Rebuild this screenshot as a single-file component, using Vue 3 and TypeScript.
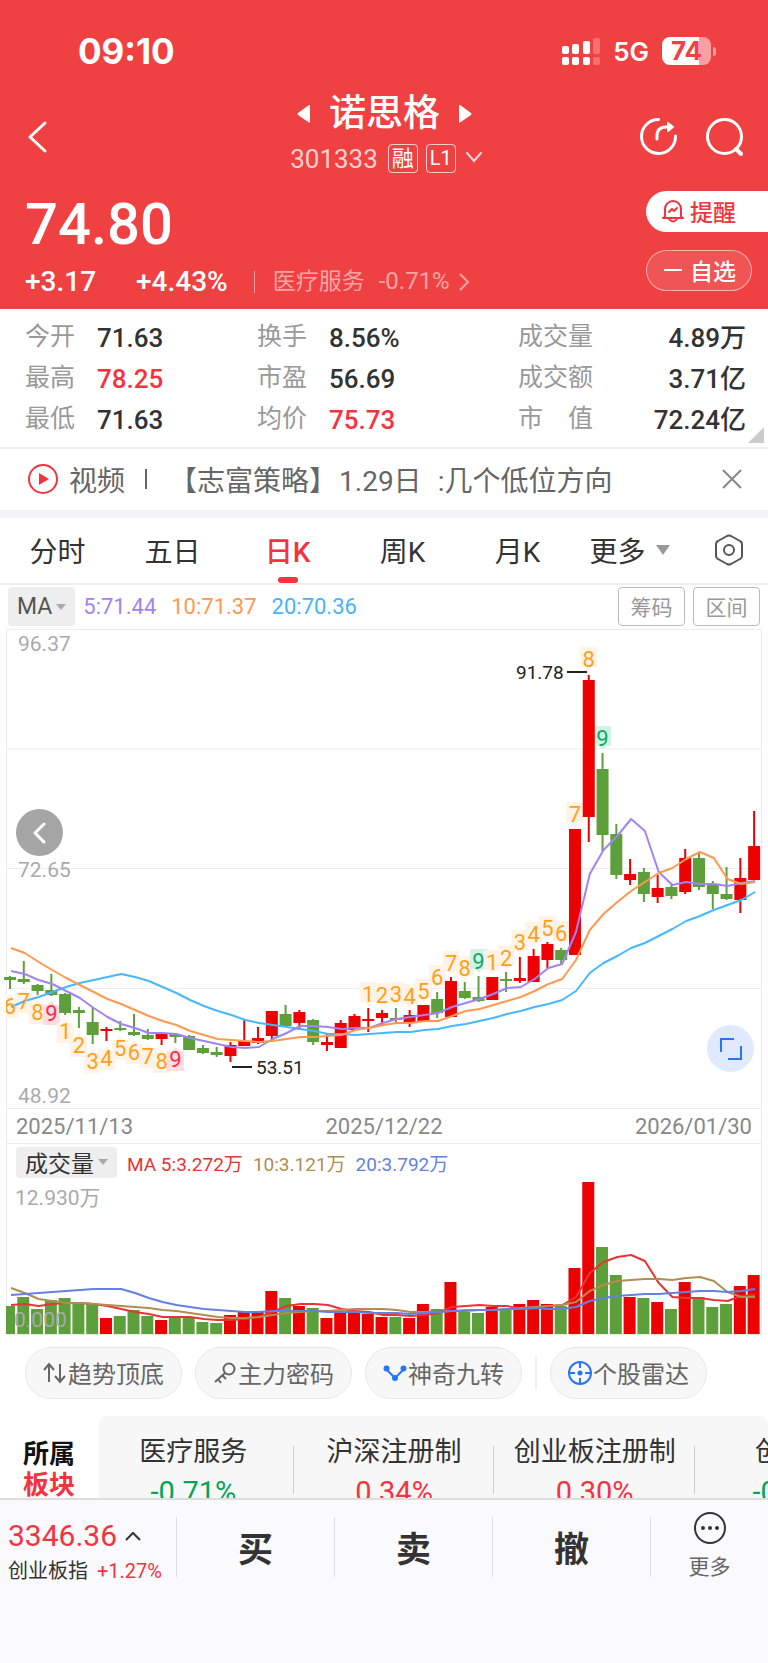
<script setup lang="ts">
import { computed, ref } from 'vue'

type Candle = [up: 0 | 1, top: number, bottom: number, high: number, low: number]
type Mark = [index: number, label: string, y: number, below: boolean]

const stats = [
  { label: '今开', value: '71.63' },
  { label: '换手', value: '8.56%' },
  { label: '成交量', value: '4.89万' },
  { label: '最高', value: '78.25', up: true },
  { label: '市盈', value: '56.69' },
  { label: '成交额', value: '3.71亿' },
  { label: '最低', value: '71.63' },
  { label: '均价', value: '75.73', up: true },
  { label: '市　值', value: '72.24亿' },
]

const periods = ['分时', '五日', '日K', '周K', '月K', '更多']
const period = ref('日K')

const candles: Candle[] = [
  [0, 977, 980, 976, 989], [0, 979, 982, 961, 984], [0, 985, 991, 984, 995], [0, 990, 995, 974, 996],
  [0, 994, 1013, 993, 1015], [0, 1010, 1013, 1007, 1028], [0, 1022, 1035, 1007, 1044], [1, 1029, 1031, 1027, 1041],
  [0, 1028, 1030, 1021, 1031], [0, 1032, 1035, 1014, 1036], [0, 1035, 1039, 1029, 1040], [1, 1034, 1039, 1033, 1045],
  [0, 1034, 1037, 1033, 1043], [0, 1036, 1050, 1035, 1050], [0, 1048, 1053, 1045, 1054], [0, 1052, 1055, 1047, 1057],
  [1, 1045, 1056, 1042, 1062], [1, 1041, 1046, 1020, 1046], [1, 1038, 1043, 1027, 1044], [1, 1011, 1036, 1011, 1039],
  [0, 1014, 1026, 1005, 1027], [1, 1012, 1023, 1010, 1030], [0, 1020, 1042, 1019, 1045], [1, 1042, 1045, 1034, 1051],
  [1, 1023, 1048, 1020, 1048], [1, 1016, 1030, 1014, 1030], [1, 1019, 1021, 1008, 1032], [1, 1013, 1018, 1010, 1026],
  [0, 1018, 1020, 1008, 1024], [1, 1015, 1023, 1010, 1027], [1, 1005, 1021, 1005, 1021], [0, 999, 1013, 992, 1018],
  [1, 981, 1017, 977, 1017], [0, 991, 998, 982, 999], [0, 997, 1001, 976, 1002], [1, 977, 1000, 977, 1000],
  [0, 979, 981, 972, 992], [1, 978, 981, 957, 983], [1, 956, 982, 949, 982], [1, 944, 960, 942, 968],
  [0, 950, 960, 948, 964], [1, 829, 955, 829, 955], [1, 680, 817, 675, 842], [0, 769, 835, 753, 851],
  [0, 834, 875, 824, 879], [1, 874, 880, 859, 885], [0, 872, 894, 868, 902], [1, 888, 897, 875, 903],
  [0, 887, 896, 885, 899], [1, 858, 892, 849, 894], [0, 858, 887, 852, 890], [0, 885, 894, 881, 909],
  [0, 894, 899, 867, 900], [1, 878, 900, 858, 913], [1, 846, 880, 811, 880],
]

const priceLines = [
  { name: 'ma20', ys: [1007, 1001, 997, 992, 987, 983, 980, 977, 974, 977, 981, 987, 993, 1000, 1006, 1011, 1015, 1020, 1023, 1025, 1027, 1029, 1031, 1034, 1034, 1035, 1034, 1033, 1032, 1032, 1030, 1029, 1026, 1024, 1021, 1018, 1014, 1011, 1007, 1004, 1000, 991, 973, 963, 956, 948, 943, 936, 929, 921, 916, 910, 905, 900, 892] },
  { name: 'ma5', ys: [971, 974, 980, 984, 991, 998, 1008, 1017, 1024, 1028, 1033, 1033, 1034, 1038, 1041, 1044, 1047, 1048, 1047, 1039, 1033, 1026, 1026, 1027, 1029, 1028, 1028, 1023, 1019, 1017, 1015, 1013, 1007, 1003, 999, 994, 988, 987, 979, 968, 964, 932, 874, 850, 836, 819, 831, 872, 885, 882, 884, 884, 886, 883, 881] },
  { name: 'ma10', ys: [948, 953, 962, 970, 978, 985, 992, 999, 1004, 1010, 1016, 1021, 1025, 1031, 1035, 1039, 1040, 1041, 1042, 1041, 1039, 1037, 1037, 1036, 1035, 1030, 1028, 1025, 1023, 1023, 1021, 1021, 1016, 1011, 1009, 1005, 1001, 997, 991, 984, 979, 960, 930, 914, 902, 891, 882, 873, 868, 859, 852, 858, 879, 884, 882] },
]

const marks: Mark[] = [
  [0, '6', 1006, true], [1, '7', 1001, true], [2, '8', 1012, true], [3, '9', 1013, true],
  [4, '1', 1031, true], [5, '2', 1045, true], [6, '3', 1061, true], [7, '4', 1058, true],
  [8, '5', 1048, true], [9, '6', 1052, true], [10, '7', 1056, true], [11, '8', 1061, true], [12, '9', 1059, true],
  [26, '1', 994, false], [27, '2', 995, false], [28, '3', 994, false], [29, '4', 996, false], [30, '5', 991, false],
  [31, '6', 977, false], [32, '7', 963, false], [33, '8', 968, false], [34, '9', 961, false],
  [35, '1', 962, false], [36, '2', 958, false], [37, '3', 942, false], [38, '4', 934, false], [39, '5', 928, false],
  [40, '6', 933, false], [41, '7', 814, false], [42, '8', 659, false], [43, '9', 738, false],
]

const volumeTops = [1306, 1297, 1309, 1300, 1298, 1303, 1304, 1318, 1316, 1310, 1316, 1320, 1317, 1317, 1322, 1323, 1315, 1312, 1312, 1291, 1298, 1306, 1308, 1318, 1313, 1313, 1314, 1317, 1317, 1318, 1304, 1309, 1282, 1312, 1313, 1307, 1309, 1304, 1300, 1304, 1306, 1268, 1182, 1247, 1275, 1297, 1298, 1302, 1309, 1282, 1297, 1307, 1304, 1286, 1275]

const volumeLines = [
  { name: 'vol5', ys: [1305, 1304, 1306, 1304, 1303, 1303, 1304, 1306, 1309, 1312, 1314, 1317, 1317, 1317, 1319, 1320, 1320, 1319, 1317, 1312, 1306, 1304, 1304, 1305, 1309, 1311, 1312, 1315, 1315, 1316, 1315, 1313, 1307, 1306, 1305, 1306, 1306, 1309, 1308, 1306, 1305, 1297, 1273, 1262, 1257, 1255, 1261, 1283, 1297, 1298, 1298, 1300, 1301, 1296, 1295] },
  { name: 'vol10', ys: [1288, 1293, 1299, 1301, 1303, 1303, 1304, 1305, 1306, 1307, 1308, 1310, 1311, 1313, 1315, 1317, 1318, 1318, 1317, 1315, 1313, 1312, 1311, 1311, 1310, 1309, 1309, 1309, 1310, 1312, 1312, 1312, 1311, 1310, 1310, 1310, 1309, 1308, 1307, 1306, 1305, 1302, 1291, 1285, 1281, 1280, 1279, 1279, 1280, 1278, 1277, 1281, 1292, 1297, 1297] },
  { name: 'vol20', ys: [1295, 1294, 1293, 1292, 1291, 1290, 1289, 1289, 1289, 1293, 1298, 1302, 1305, 1307, 1309, 1310, 1311, 1312, 1312, 1311, 1311, 1311, 1311, 1312, 1312, 1312, 1313, 1313, 1313, 1314, 1313, 1312, 1311, 1311, 1310, 1310, 1309, 1309, 1308, 1309, 1309, 1307, 1301, 1298, 1296, 1295, 1294, 1294, 1293, 1292, 1291, 1291, 1292, 1291, 1289] },
]

const sectors = [
  { name: '医疗服务', change: '-0.71%' },
  { name: '沪深注册制', change: '0.34%' },
  { name: '创业板注册制', change: '0.30%' },
  { name: '创新药', change: '-0.52%' },
]

const x = (i: number) => 10 + i * 13.78
const path = (ys: number[]) => ys.map((y, i) => `${(x(i) + 1).toFixed(1)},${y}`).join(' ')
const tone = (m: Mark) => (m[1] !== '9' ? 'count' : m[3] ? 'nine-low' : 'nine-high')
const pointer = (m: Mark) => {
  const c = x(m[0])
  return m[3] ? `${c - 4},${m[2] - 8} ${c},${m[2] - 12} ${c + 4},${m[2] - 8}` : `${c - 4},${m[2] + 8} ${c},${m[2] + 12} ${c + 4},${m[2] + 8}`
}
const volumes = computed(() => volumeTops.map((top, i) => ({ top, up: candles[i][0] === 1 })))
</script>

<template>
  <main class="app">
    <header class="head">
      <div class="status">
        <span class="clock">09:10</span>
        <div class="signals">
          <svg width="40" height="30" viewBox="0 0 40 30" fill="#fff">
            <rect x="1" y="10" width="7" height="8" rx="2" /><rect x="11" y="8" width="7" height="10" rx="2" /><rect x="22" y="5" width="7" height="13" rx="2" />
            <rect x="1" y="21" width="7" height="8" rx="2" /><rect x="11" y="21" width="7" height="8" rx="2" /><rect x="22" y="21" width="7" height="8" rx="2" />
            <g opacity=".25"><rect x="32" y="2" width="7" height="16" rx="2" /><rect x="32" y="21" width="7" height="8" rx="2" /></g>
          </svg>
          <span class="net">5G</span>
          <span class="battery">74</span>
          <i class="nub"></i>
        </div>
      </div>

      <div class="nav">
        <button class="icon-btn back" aria-label="返回">
          <svg width="22" height="34" viewBox="0 0 22 34" fill="none" stroke="#fff" stroke-width="3" stroke-linecap="round" stroke-linejoin="round"><path d="M18 3 3 17l15 14" /></svg>
        </button>
        <div class="name-block">
          <div class="name-row">
            <button class="icon-btn" aria-label="上一只"><svg width="14" height="18" viewBox="0 0 14 18" fill="#fff"><path d="M12 0Q13 0 13 1V17Q13 18 12 17.500L1 10Q0 9 1 8Z" /></svg></button>
            <h1>诺思格</h1>
            <button class="icon-btn" aria-label="下一只"><svg width="14" height="18" viewBox="0 0 14 18" fill="#fff"><path d="M2 0Q1 0 1 1V17Q1 18 2 17.500L13 10Q14 9 13 8Z" /></svg></button>
          </div>
          <div class="code-row">
            <span class="code">301333</span>
            <span class="tag rong">融</span>
            <span class="tag">L1</span>
            <svg class="fold" width="16" height="12" viewBox="0 0 16 12" fill="none" stroke="#fff" stroke-opacity=".8" stroke-width="2" stroke-linecap="round"><path d="m1 1 7 8 7-8" /></svg>
          </div>
        </div>
        <div class="actions">
          <button class="icon-btn" aria-label="分享">
            <svg width="40" height="40" viewBox="0 0 40 40" fill="none" stroke="#fff" stroke-width="3" stroke-linecap="round" stroke-linejoin="round"><path d="M20.500 2.500A17 17 0 1 0 37.500 19" /><path d="M19 22v-3q0-9 9-9h5" /><path d="m30 6 5 4-5 4Z" fill="#fff" stroke-width="2" /></svg>
          </button>
          <button class="icon-btn" aria-label="搜索">
            <svg width="40" height="40" viewBox="0 0 40 40" fill="none" stroke="#fff" stroke-width="3" stroke-linecap="round"><circle cx="19.500" cy="19.500" r="17" /><path d="m31 32 5 5" stroke-width="4" /></svg>
          </button>
        </div>
      </div>

      <div class="quote">
        <div class="figures">
          <strong class="price">74.80</strong>
          <div class="moves">
            <span class="move first">+3.17</span><span class="move">+4.43%</span>
            <a class="industry" href="#industry">
              <span class="ind-name">医疗服务</span><span class="ind-change">-0.71%</span>
              <svg width="12" height="20" viewBox="0 0 12 20" fill="none" stroke="currentColor" stroke-width="2"><path d="m2 2 8 8-8 8" /></svg>
            </a>
          </div>
        </div>
        <div class="side">
          <button class="remind">
            <svg width="24" height="24" viewBox="0 0 24 24" fill="none" stroke="#f5333f" stroke-width="2" stroke-linecap="round" stroke-linejoin="round"><path d="M4 18v-8a8 8 0 0 1 16 0v8l2 1H2ZM8 20q4 5 8 0M8 13l3-3 2 2 3-3" /></svg>
            提醒
          </button>
          <button class="watch"><i class="minus"></i>自选</button>
        </div>
      </div>
    </header>

    <section class="stats-wrap">
      <dl class="stats">
        <div v-for="s in stats" :key="s.label" class="stat">
          <dt>{{ s.label }}</dt>
          <dd :class="{ up: s.up }">{{ s.value }}</dd>
        </div>
      </dl>
      <i class="corner"></i>
    </section>

    <section class="video">
      <svg width="32" height="32" viewBox="0 0 32 32" fill="none"><circle cx="16" cy="16" r="14" stroke="#f5333f" stroke-width="2" /><path d="m12 10 10 6-10 6Z" fill="#f5333f" /></svg>
      <a href="#video"><span>视频</span><i class="bar"></i><span>【志富策略】</span><span class="day">1.29日</span><span>:几个低位方向</span></a>
      <button class="icon-btn" aria-label="关闭"><svg width="20" height="20" viewBox="0 0 20 20" stroke="#888" stroke-width="2"><path d="m1 1 18 18M19 1 1 19" /></svg></button>
    </section>

    <nav class="tabs">
      <button v-for="p in periods" :key="p" :class="{ active: p === period }" @click="period = p">
        {{ p }}<i v-if="p === '更多'" class="caret"></i>
      </button>
      <button aria-label="设置">
        <svg width="30" height="32" viewBox="0 0 30 32" fill="none" stroke="#555" stroke-width="2" stroke-linejoin="round"><path d="M13 2Q15 1 17 2L26 7Q28 8 28 10V22Q28 24 26 25L17 30Q15 31 13 30L4 25Q2 24 2 22V10Q2 8 4 7Z" /><circle cx="15" cy="16" r="5" /></svg>
      </button>
    </nav>

    <div class="ma-row">
      <button class="chip">MA<i class="caret small"></i></button>
      <span class="c-ma5">5:71.44</span><span class="c-ma10">10:71.37</span><span class="c-ma20">20:70.36</span>
      <div class="tools"><button>筹码</button><button>区间</button></div>
    </div>

    <section class="kchart">
      <svg viewBox="0 629 768 480">
        <path class="grid" d="M6.500 1109V629.500H761.500V1109M6 749H761M6 868.500H761M6 988.500H761M6 1108.500H761" />
        <text class="axis" x="18" y="651">96.37</text>
        <text class="axis" x="18" y="877">72.65</text>
        <text class="axis" x="18" y="1103">48.92</text>
        <g v-for="m in marks" :key="m[0]" :class="tone(m)">
          <rect :x="x(m[0]) - 8.5" :y="m[3] ? m[2] - 8 : m[2] - 12" width="17" height="20" />
          <polygon :points="pointer(m)" />
        </g>
        <g v-for="(c, i) in candles" :key="i" :class="c[0] ? 'rise' : 'fall'">
          <rect :x="x(i) - 1" :y="c[3]" width="2" :height="c[4] - c[3]" />
          <rect :x="x(i) - 6" :y="c[1]" width="12" :height="c[2] - c[1]" />
        </g>
        <polyline v-for="l in priceLines" :key="l.name" :class="l.name" :points="path(l.ys)" />
        <text v-for="m in marks" :key="m[0]" class="num" :class="tone(m)" :x="x(m[0])" :y="m[2] + 8">{{ m[1] }}</text>
        <rect class="cover" x="0" y="990" width="6" height="30" />
        <path d="M567 672H587M232 1067H252" stroke="#222" stroke-width="2" />
        <text class="peak" x="516" y="679">91.78</text>
        <text class="peak" x="256" y="1074">53.51</text>
      </svg>
      <button class="round prev" aria-label="更早"><svg width="14" height="22" viewBox="0 0 14 22" fill="none" stroke="#fff" stroke-width="3" stroke-linecap="round" stroke-linejoin="round"><path d="m11 2-9 9 9 9" /></svg></button>
      <button class="round full" aria-label="全屏"><svg width="22" height="22" viewBox="0 0 22 22" fill="none" stroke="#2476ff" stroke-width="2"><path d="M1 14V1h13M8 21h13V8" /></svg></button>
    </section>

    <div class="dates"><time>2025/11/13</time><time>2025/12/22</time><time>2026/01/30</time></div>

    <div class="vol-row">
      <button class="chip vol">成交量<i class="caret small"></i></button>
      <span class="c-vol5">MA 5:3.272万</span><span class="c-vol10">10:3.121万</span><span class="c-vol20">20:3.792万</span>
    </div>
    <svg class="vchart" viewBox="0 1180 768 155">
      <path class="grid" d="M6.500 1180V1334.500H761.500V1180" />
      <text class="axis" x="15" y="1205">12.930万</text>
      <rect v-for="(v, i) in volumes" :key="i" :class="v.up ? 'rise' : 'fall'" :x="i ? x(i) - 6.5 : 6" :y="v.top" :width="i ? 12 : 9" :height="1334 - v.top" />
      <polyline v-for="l in volumeLines" :key="l.name" :class="l.name" :points="path(l.ys)" />
      <text class="axis" x="14" y="1327">0.000</text>
    </svg>

    <div class="pills">
      <button>
        <svg width="24" height="24" viewBox="0 0 24 24" fill="none" stroke="#666" stroke-width="2"><path d="M6 21V4M1 9l5-6 5 6M17 3v17M12 15l5 6 5-6" /></svg><span>趋势顶底</span>
      </button>
      <button>
        <svg width="24" height="24" viewBox="0 0 24 24" fill="none" stroke="#666" stroke-width="2"><circle cx="16" cy="8" r="5.500" /><path d="M12 12 2 21M9 14l4 4M5 18l3 4" /></svg><span>主力密码</span>
      </button>
      <button>
        <svg width="24" height="24" viewBox="0 0 24 24" fill="#2476ff" stroke="#2476ff" stroke-width="2"><path d="m3 8 9 9 9-9" fill="none" /><circle cx="3.500" cy="7.500" r="2" /><circle cx="12" cy="17" r="2" /><circle cx="20.500" cy="7.500" r="2" /></svg><span>神奇九转</span>
      </button>
      <i class="sep"></i>
      <button>
        <svg width="24" height="24" viewBox="0 0 24 24" fill="none" stroke="#2476ff" stroke-width="2"><circle cx="12" cy="12" r="11" /><path d="M12 1v6M12 17v6M1 12h6M17 12h6" /><circle cx="12" cy="12" r="1.500" fill="#2476ff" /></svg><span>个股雷达</span>
      </button>
    </div>

    <section class="sector">
      <h2>所属<br /><em>板块</em></h2>
      <div class="sector-list">
        <a v-for="s in sectors" :key="s.name" href="#sector">
          <span>{{ s.name }}</span>
          <b :class="s.change.startsWith('-') ? 'down' : 'up'">{{ s.change }}</b>
        </a>
      </div>
    </section>

    <footer class="dock">
      <button class="index">
        <span class="index-top">3346.36<svg width="16" height="10" viewBox="0 0 16 10" fill="none" stroke="#333" stroke-width="2"><path d="m1 9 7-7 7 7" /></svg></span>
        <span class="index-sub">创业板指<b>+1.27%</b></span>
      </button>
      <button class="trade">买</button>
      <button class="trade">卖</button>
      <button class="trade">撤</button>
      <button class="more">
        <svg width="34" height="34" viewBox="0 0 34 34" fill="none"><circle cx="17" cy="17" r="15" stroke="#333" stroke-width="2" /><g fill="#333"><circle cx="10" cy="17" r="2" /><circle cx="17" cy="17" r="2" /><circle cx="24" cy="17" r="2" /></g></svg>
        更多
      </button>
    </footer>
  </main>
</template>

<style>
body { margin: 0; background: #fafafd; }
</style>

<style scoped>
.app { font-family: Roboto, "Noto Sans CJK SC", sans-serif; color: #333; background: #fff; overflow: hidden; min-height: 100vh; display: flex; flex-direction: column; }
.app * { box-sizing: border-box; }
svg { display: block; flex: none; }
button { font: inherit; color: inherit; background: none; border: 0; padding: 0; cursor: pointer; }
a { color: inherit; text-decoration: none; }
.icon-btn { display: flex; align-items: center; justify-content: center; }
.up { color: #f5333f; }
.down { color: #00a65a; }

.head { background: #f04142; color: #fff; }
.status { height: 90px; padding: 12px 52px 0 78px; display: flex; align-items: center; justify-content: space-between; font-family: Inter, sans-serif; }
.clock { font-size: 35px; font-weight: 700; line-height: 40px; }
.signals { display: flex; align-items: center; }
.net { font-size: 26px; font-weight: 600; margin: 0 13px 0 12px; }
.battery { width: 49px; height: 28px; border-radius: 8px; background: linear-gradient(90deg, #fff 75%, #f8a0a1 75%); color: #f04142; font-size: 26px; font-weight: 700; line-height: 28px; text-align: center; }
.nub { width: 3px; height: 9px; margin-left: 2px; border-radius: 0 4px 4px 0; background: #f8a0a1; }

.nav { height: 93px; padding: 0 23px 0 27px; display: grid; grid-template-columns: 1fr auto 1fr; align-items: center; }
.back { justify-self: start; }
.name-block { align-self: start; padding-top: 2px; }
.name-row { height: 44px; padding-right: 3px; display: flex; align-items: center; justify-content: center; gap: 18px; }
h1 { margin: 0; font-size: 37px; font-weight: 500; line-height: 44px; }
.code-row { margin-top: 7px; height: 30px; display: flex; align-items: center; gap: 8px; }
.code { padding-top: 2px; font-size: 26px; color: #fbd2d2; }
.tag { width: 30px; height: 29px; border: 1px solid rgba(255, 255, 255, .75); border-radius: 4px; font-size: 20px; line-height: 27px; text-align: center; }
.rong { font-size: 22px; margin-left: 2px; }
.fold { margin-left: 2px; }
.actions { justify-self: end; display: flex; gap: 27px; }

.quote { padding: 8px 0 13px 25px; display: flex; justify-content: space-between; }
.figures { padding-top: 3px; }
.price { display: block; font-size: 58px; font-weight: 500; line-height: 60px; }
.moves { margin-top: 14px; height: 28px; display: flex; align-items: center; }
.move { font-size: 28px; font-weight: 500; line-height: 28px; }
.first { width: 111px; }
.industry { margin-left: 26px; padding-left: 18px; height: 22px; border-left: 1px solid rgba(255, 255, 255, .5); display: flex; align-items: center; font-size: 23px; color: #f8a5a5; }
.ind-name { padding-bottom: 6px; }
.ind-change { margin: 0 8px 0 14px; padding-bottom: 2px; font-size: 24px; }
.side { width: 122px; display: flex; flex-direction: column; gap: 18px; font-size: 23px; font-weight: 500; }
.side button { height: 41px; padding-bottom: 2px; display: flex; align-items: center; }
.remind { padding-left: 15px; gap: 5px; background: #fff; color: #f5333f; border-radius: 21px 0 0 21px; }
.watch { width: 106px; padding-left: 17px; gap: 8px; border: 1px solid rgba(255, 255, 255, .55); background: rgba(255, 255, 255, .1); border-radius: 21px; }
.minus { width: 18px; height: 2px; background: #fff; }

.stats-wrap { position: relative; border-bottom: 2px solid #eee; }
.stats { margin: 0; padding: 8px 22px 7px 25px; display: grid; grid-template-columns: 232fr 261fr 228fr; grid-auto-rows: 41px; }
.stat { display: flex; align-items: center; font-size: 26px; }
dt { width: 72px; padding-bottom: 2px; font-size: 25px; color: #999; white-space: nowrap; line-height: 30px; }
dd { margin: 0; font-weight: 500; white-space: nowrap; line-height: 30px; }
.stat:nth-child(3n) dt { width: auto; }
.stat:nth-child(3n) dd { margin-left: auto; }
.corner { position: absolute; right: 4px; bottom: 4px; border: 8px solid; border-color: transparent #ccc #ccc transparent; }

.video { height: 69px; padding: 0 26px 2px 27px; display: flex; align-items: center; font-size: 28px; color: #666; border-bottom: 8px solid #f2f4f9; }
.video a { flex: 1; margin-left: 10px; display: flex; align-items: center; white-space: nowrap; }
.bar { width: 2px; height: 20px; margin: 0 22px 0 20px; background: #666; }
.day { margin: 0 16px 0 2px; }

.tabs { height: 67px; display: grid; grid-template-columns: repeat(6, 115fr) 78fr; border-bottom: 2px solid #eee; font-size: 28px; }
.tabs button { position: relative; padding-bottom: 2px; display: flex; align-items: center; justify-content: center; }
.tabs button:nth-child(6) { padding-right: 6px; }
.tabs .active { color: #f5333f; font-weight: 500; }
.tabs .active::after { content: ""; position: absolute; bottom: 0; width: 20px; height: 6px; border-radius: 3px; background: #f5333f; }
.caret { margin-left: 10px; border: 7px solid transparent; border-top: 10px solid #999; border-bottom: 0; }
.caret.small { margin-left: 4px; border-width: 6px 5px 0; border-top-color: #aaa; }

.ma-row { height: 44px; padding: 2px 8px 3px; display: flex; align-items: center; gap: 15px; font-size: 22px; }
.chip { height: 39px; padding: 0 9px; display: flex; align-items: center; background: #eee; border-radius: 4px; font-size: 23px; color: #555; }
.ma-row .chip { margin-right: -7px; }
.c-ma5 { color: #a084f5; }
.c-ma10 { color: #ff9850; }
.c-ma20 { color: #45b4f8; }
.tools { margin-left: auto; display: flex; gap: 8px; }
.tools button { width: 67px; height: 39px; padding-bottom: 2px; border: 1px solid #bbb; border-radius: 4px; color: #999; font-size: 21px; }

.kchart { position: relative; }
.kchart > svg, .vchart { width: 100%; height: auto; }
.grid { fill: none; stroke: #ececec; stroke-width: 1; }
.axis { font-size: 21px; fill: #aaa; }
.rise { fill: #ec0000; }
.fall { fill: #5d9f3a; }
polyline { fill: none; stroke-width: 2; stroke-linejoin: round; }
.ma5 { stroke: #a084f5; }
.ma10 { stroke: #ff9850; }
.ma20 { stroke: #45b8ff; }
.vol5 { stroke: #e83434; }
.vol10 { stroke: #b08d52; }
.vol20 { stroke: #6480e4; }
.count { fill: #fff3e6; }
.nine-low { fill: #ffdde1; }
.nine-high { fill: #d3f2e4; }
.num { font-size: 22px; text-anchor: middle; }
.num.count { fill: #ff9f1a; }
.num.nine-low { fill: #ff2d48; }
.num.nine-high { fill: #0bab68; }
.cover { fill: #fff; }
.peak { font-size: 19px; fill: #222; }
.round { position: absolute; width: 47px; height: 47px; border-radius: 50%; display: flex; align-items: center; justify-content: center; }
.prev { left: 16px; top: 180px; background: #a5a5a5; }
.full { right: 14px; bottom: 37px; background: #dfe9ff; }

.dates, .vol-row { margin: 0 6px; border: solid #ececec; border-width: 0 1px; display: flex; align-items: center; }
.dates { height: 35px; padding: 1px 9px 0; justify-content: space-between; border-bottom-width: 1px; font-size: 22px; color: #888; }
.vol-row { height: 36px; padding: 3px 9px 2px; gap: 10px; font-size: 19px; }
.chip.vol { height: 31px; padding-bottom: 2px; color: #333; }
.c-vol5 { color: #e83434; }
.c-vol10 { color: #b08d52; }
.c-vol20 { color: #6480e4; }

.pills { padding: 12px 25px 17px; display: flex; align-items: center; gap: 13px; }
.pills button { width: 157px; height: 52px; display: flex; align-items: center; justify-content: center; gap: 1px; border: 1px solid #e8e8e8; border-radius: 26px; background: #f7f7f7; color: #666; font-size: 24px; white-space: nowrap; }
.pills span { padding-bottom: 2px; }
.sep { width: 2px; height: 32px; background: #eee; }

.sector { height: 82px; overflow: hidden; display: flex; }
h2 { width: 99px; flex: none; margin: 0; padding: 23px 0 0 23px; font-size: 26px; line-height: 31px; font-weight: 700; color: #111; }
h2 em { font-style: normal; color: #f5333f; }
.sector-list { flex: 1; min-width: 0; display: flex; background: #f7f7f7; border-radius: 8px 8px 0 0; }
.sector-list a { flex: none; width: 30%; padding-top: 18px; display: flex; flex-direction: column; align-items: center; gap: 4px; font-size: 27px; line-height: 36px; white-space: nowrap; background: linear-gradient(#ccc, #ccc) right 30px / 1px 48px no-repeat; }
.sector-list a:first-child { margin-left: -6px; }
.sector-list b { font-size: 29px; font-weight: 400; }

.dock { flex: 1; min-height: 165px; padding-top: 17px; border-top: 2px solid #ddd; background: #fafafd; display: grid; grid-template-columns: 176fr 158fr 158fr 158fr 118fr; grid-template-rows: 60px; }
.dock button + button { border-left: 1px solid #ddd; }
.dock .index { padding-left: 8px; display: flex; flex-direction: column; text-align: left; }
.index-top { display: flex; align-items: center; gap: 8px; font-size: 30px; line-height: 38px; color: #f5333f; }
.index-sub { font-size: 20px; line-height: 32px; white-space: nowrap; }
.index-sub b { margin-left: 9px; font-weight: 400; color: #f5333f; }
.trade { padding-bottom: 2px; font-size: 35px; font-weight: 700; }
.dock .more { display: flex; flex-direction: column; align-items: center; gap: 8px; font-size: 21px; line-height: 28px; color: #666; }
.more svg { margin-top: -6px; }
</style>
